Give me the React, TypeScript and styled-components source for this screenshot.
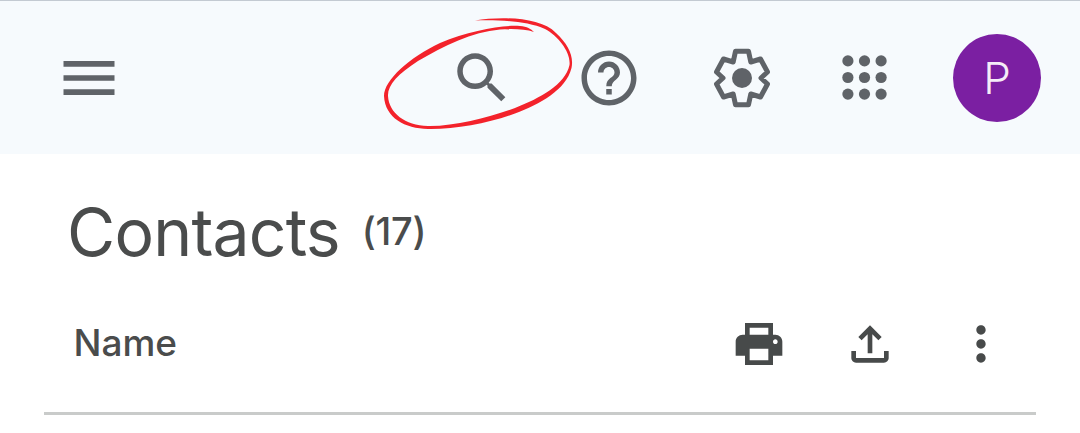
import React from 'react'
import styled, { createGlobalStyle } from 'styled-components'

const GlobalStyle = createGlobalStyle`
  html, body {
    margin: 0;
    padding: 0;
    background: #ffffff;
  }
  body {
    font-family: Inter, Roboto, "Liberation Sans", sans-serif;
  }
`

const Page = styled.div`
  position: relative;
  width: 1080px;
  height: 433px;
  overflow: hidden;
`

const TopBar = styled.header`
  height: 153px;
  display: flex;
  align-items: center;
  background: #f6fafd;
  border-top: 1px solid #c3cad2;
  padding: 0 39px 0 54.5px;
`

const BarIcon = styled.svg<{ $size?: number; $left?: number }>`
  flex: none;
  display: block;
  width: ${p => p.$size ?? 68}px;
  height: ${p => p.$size ?? 68}px;
  margin-left: ${p => p.$left ?? 0}px;
  fill: #5f6368;
`

const Avatar = styled.div`
  flex: none;
  width: 88px;
  height: 88px;
  margin-left: 66.5px;
  border-radius: 50%;
  background: #7b1fa2;
  color: #f5ecf8;
  font-size: 44px;
  font-weight: 350;
  line-height: 88px;
  text-align: center;
`

const TitleRow = styled.div`
  display: flex;
  padding: 36px 0 0 67px;
  color: #4a4c4c;
`

const Title = styled.h1`
  margin: 0;
  font-size: 66px;
  font-weight: 380;
  letter-spacing: -0.8px;
  line-height: 84px;
`

const Count = styled.span`
  margin: 19px 0 0 22px;
  font-size: 38px;
  font-weight: 450;
  letter-spacing: -0.3px;
  line-height: 44px;
`

const ListHeader = styled.div`
  display: flex;
  align-items: flex-start;
  margin: 20px 44px 0;
  padding: 22px 27.5px 0 29.5px;
  height: 121px;
  border-bottom: 3px solid #c9cbca;
  box-sizing: border-box;
  color: #4a4c4c;
`

const ColumnName = styled.span`
  flex: 1;
  font-size: 37px;
  font-weight: 500;
  line-height: 54px;
`

const ListIcon = styled.svg<{ $left?: number }>`
  flex: none;
  display: block;
  width: 56px;
  height: 56px;
  margin-left: ${p => p.$left ?? 0}px;
  fill: #474a4a;
`

const Scribble = styled.svg`
  position: absolute;
  left: 0;
  top: 0;
  width: 1080px;
  height: 433px;
  pointer-events: none;
  fill: #f3222b;
`

// centre line of the cog, in px from its middle
const cogPoints =
  '6.5,-26.7 8.8,-16 18.5,-19 25.5,-6 19,0 25.5,6 18.5,19 8.8,16 6.5,26.7 ' +
  '-6.5,26.7 -8.8,16 -18.5,19 -25.5,6 -19,0 -25.5,-6 -18.5,-19 -8.8,-16 -6.5,-26.7'

const App = () => {
  const dots: number[] = [-16.6, 0, 16.6]
  return (
    <>
      <GlobalStyle />
      <Page>
        <TopBar>
          <BarIcon viewBox="0 0 24 24">
            <path d="M3 18h18v-2H3v2zm0-5h18v-2H3v2zm0-7v2h18V6H3z" />
          </BarIcon>
          <BarIcon viewBox="0 0 24 24" $size={66} $left={326.5}>
            <path d="M15.5 14h-.79l-.28-.27C15.41 12.59 16 11.11 16 9.5 16 5.91 13.09 3 9.5 3S3 5.91 3 9.5 5.91 16 9.5 16c1.61 0 3.09-.59 4.23-1.57l.27.28v.79l5 4.99L20.49 19l-4.99-5zm-6 0C7.01 14 5 11.99 5 9.5S7.01 5 9.5 5 14 7.01 14 9.5 11.99 14 9.5 14z" />
          </BarIcon>
          <BarIcon viewBox="0 0 24 24" $size={66} $left={61}>
            <path d="M11 18h2v-2h-2v2zm1-16C6.48 2 2 6.48 2 12s4.48 10 10 10 10-4.48 10-10S17.52 2 12 2zm0 18c-4.41 0-8-3.59-8-8s3.59-8 8-8 8 3.59 8 8-3.59 8-8 8zm0-14c-2.21 0-4 1.79-4 4h2c0-1.1.9-2 2-2s2 .9 2 2c0 2-3 1.75-3 5h2c0-2.25 3-2.5 3-5 0-2.21-1.79-4-4-4z" />
          </BarIcon>
          <BarIcon viewBox="-34 -34 68 68" $left={66}>
            <polygon points={cogPoints} fill="none" stroke="#5f6368" strokeWidth="5" strokeLinejoin="round" />
            <circle r="10" />
          </BarIcon>
          <BarIcon viewBox="-22.5 -22.5 45 45" $size={45} $left={65.5}>
            {dots.map(y =>
              dots.map(x => <circle key={`${x}:${y}`} cx={x} cy={y} r="5.6" />)
            )}
          </BarIcon>
          <Avatar>P</Avatar>
        </TopBar>

        <TitleRow>
          <Title>Contacts</Title>
          <Count>(17)</Count>
        </TitleRow>

        <ListHeader>
          <ColumnName>Name</ColumnName>
          <ListIcon viewBox="0 0 24 24">
            <path d="M19 8H5c-1.66 0-3 1.34-3 3v6h4v4h12v-4h4v-6c0-1.66-1.34-3-3-3zm-3 11H8v-5h8v5zm3-7c-.55 0-1-.45-1-1s.45-1 1-1 1 .45 1 1-.45 1-1 1zM8 5h8v3h2V3H6v5h2z" />
          </ListIcon>
          <ListIcon viewBox="0 0 24 24" $left={55}>
            <path d="M18 15v3H6v-3H4v3c0 1.1.9 2 2 2h12c1.1 0 2-.9 2-2v-3h-2zM7 9l1.41 1.41L11 7.83V16h2V7.83l2.59 2.58L17 9l-5-5-5 5z" />
          </ListIcon>
          <ListIcon viewBox="0 0 24 24" $left={55}>
            <path d="M12 8c1.1 0 2-.9 2-2s-.9-2-2-2-2 .9-2 2 .9 2 2 2zm0 2c-1.1 0-2 .9-2 2s.9 2 2 2 2-.9 2-2-.9-2-2-2zm0 6c-1.1 0-2 .9-2 2s.9 2 2 2 2-.9 2-2-.9-2-2-2z" />
          </ListIcon>
        </ListHeader>

        {/* hand drawn ring round the search icon */}
        <Scribble viewBox="0 0 1080 433">
          <path d="M475 20.5C500 16.5 540 16.5 556 33C568 44 574 56 571.5 68C566 90 540 104 515 113.5C490 123 455 129.5 428 129C405 128.5 385 118 384 96C384 80 410 57 440 43C470 30 505 24.5 520 26C527 26.5 531 29 534 32C525 29 512 28.5 500 29.5C472 32 444 46 418 61C398 74 387.5 85 388 96C389 113 405 125.5 428 126C455 126.5 490 117 515 108C540 98 565 85 569.5 65C571 52 558 36 545 29C525 20 495 20 475 20.5Z" />
        </Scribble>
      </Page>
    </>
  )
}

export default App
